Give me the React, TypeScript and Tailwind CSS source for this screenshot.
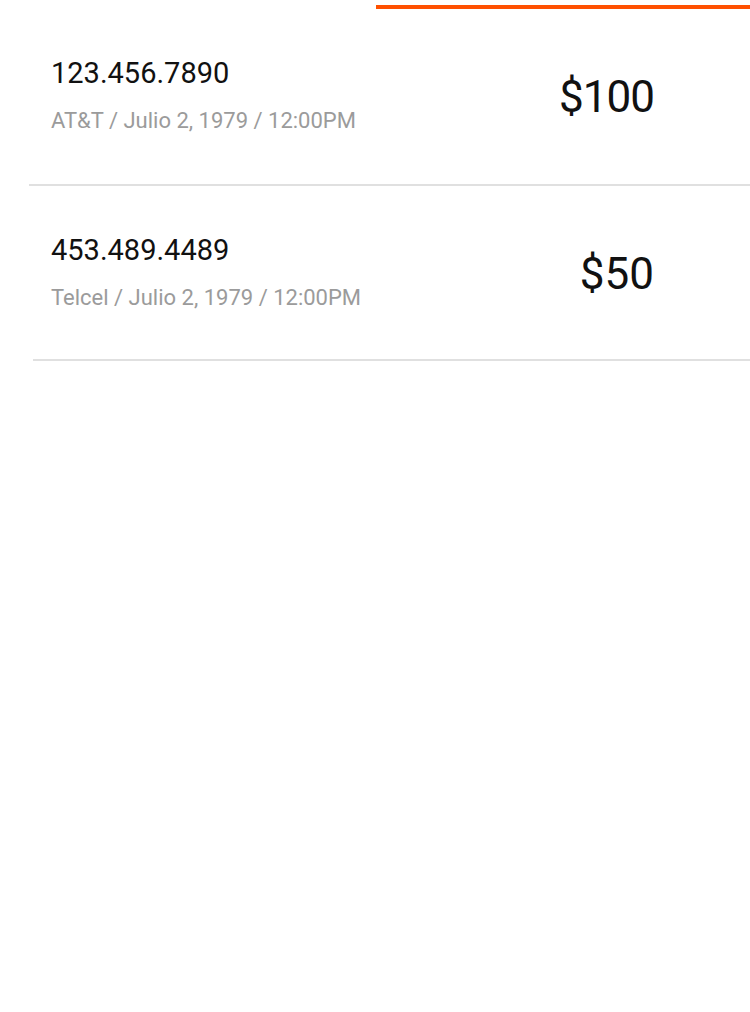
const recharges = [
  {
    phone: '123.456.7890',
    detail: 'AT&T / Julio 2, 1979 / 12:00PM',
    amount: '$100',
    rowClass: 'h-[175px]',
    amountClass: 'tracking-[-1px]',
    dividerClass: 'ml-[29px]',
  },
  {
    phone: '453.489.4489',
    detail: 'Telcel / Julio 2, 1979 / 12:00PM',
    amount: '$50',
    rowClass: 'h-[173px]',
    amountClass: 'tracking-normal',
    dividerClass: 'ml-[33px]',
  },
];

export default function App() {
  return (
    <div
      className="min-h-[1012px] w-[750px] bg-white"
      style={{ fontFamily: 'Roboto, "Noto Sans", sans-serif' }}
    >
      {/* active tab indicator */}
      <div className="pt-[5px]">
        <div className="ml-[376px] h-1 bg-[#ff5000]" />
      </div>

      <ul>
        {recharges.map((item) => (
          <li key={item.phone}>
            <div className={`flex items-start justify-between pl-[51px] pr-[96px] pt-[50px] ${item.rowClass}`}>
              <div className="flex flex-col">
                <span className="text-[29px] leading-none text-[#111]">{item.phone}</span>
                <span className="mt-[22px] text-[22px] leading-none text-[#9b9b9b]">{item.detail}</span>
              </div>
              <span className={`mt-[16px] text-[44px] leading-none text-[#111] ${item.amountClass}`}>
                {item.amount}
              </span>
            </div>
            <div className={`h-[2px] bg-[#e0e0e0] ${item.dividerClass}`} />
          </li>
        ))}
      </ul>
    </div>
  );
}
